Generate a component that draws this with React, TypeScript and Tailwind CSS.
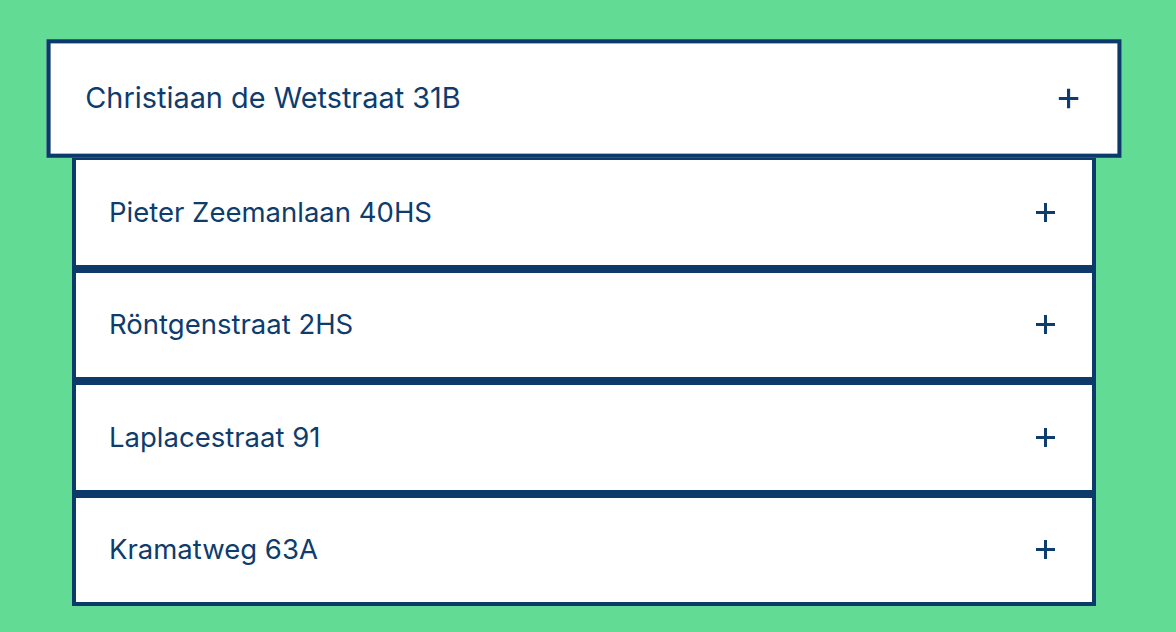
const addresses = [
  "Christiaan de Wetstraat 31B",
  "Pieter Zeemanlaan 40HS",
  "Röntgenstraat 2HS",
  "Laplacestraat 91",
  "Kramatweg 63A",
]

function PlusIcon() {
  return (
    <svg width="19" height="19" viewBox="0 0 19 19" className="shrink-0 text-[#0e3c6d]">
      <path d="M9.5 0v19M0 9.5h19" stroke="currentColor" strokeWidth="3" />
    </svg>
  )
}

export default function App() {
  return (
    <div
      className="min-h-screen w-full bg-[#62db95] pl-[72px] pr-[80px] pt-[43.5px]"
      style={{ fontFamily: "Inter, 'Noto Sans', sans-serif" }}
    >
      <ul className="flex flex-col">
        {addresses.map((address, i) => (
          <li
            key={address}
            className={
              i === 0
                ? "relative z-10 flex h-[112.5px] -translate-y-[2px] scale-[1.05] items-center justify-between border-4 border-[#0b3a6b] bg-white pl-[33px] pr-[37px]"
                : "relative flex h-[112.5px] items-center justify-between border-4 border-[#0b3a6b] bg-white pl-[33px] pr-[37px]"
            }
          >
            <span className="text-[27.5px] leading-none text-[#0e3c6d]">{address}</span>
            <PlusIcon />
          </li>
        ))}
      </ul>
    </div>
  )
}
